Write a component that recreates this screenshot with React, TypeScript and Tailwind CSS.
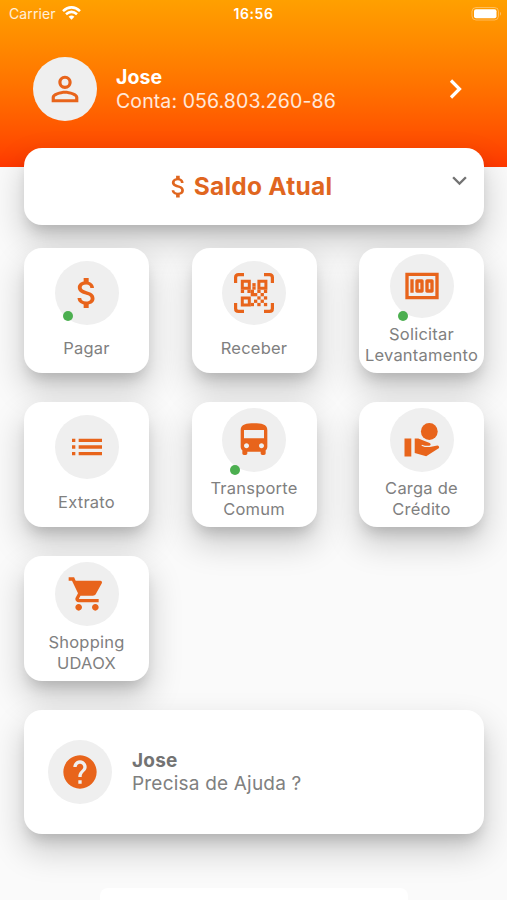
import type { ReactNode } from 'react';
import {
  MdAttachMoney, MdDirectionsBus, MdHelp, MdKeyboardArrowDown,
  MdList, MdMoney, MdPersonOutline, MdShoppingCart,
} from 'react-icons/md';

const card = 'bg-white rounded-[18px] shadow-[0_10px_14px_-5px_rgba(0,0,0,0.16),0_16px_32px_2px_rgba(0,0,0,0.18)]';

function Disc({ children }: { children: ReactNode }) {
  return (
    <div className="flex size-16 shrink-0 items-center justify-center rounded-full bg-[#efefef] text-[#e8641b]">
      {children}
    </div>
  );
}

function HandIcon() {
  return (
    <svg width="36" height="34" viewBox="0 0 36 34" fill="currentColor">
      <circle cx="25.3" cy="8.5" r="8.4" />
      <path d="M.5 15.5h6.8v18H.5zM10.7 15.5h3.6L25.7 20c1.4.6 1.3 2.6-.3 2.8h-4.5l-3-1.1-.4 1.1 3.2 1.3h5.2l7.4-1.7c1-.1 1.8.8 1.8 2v.7L22.2 33.3 10.7 30z" />
    </svg>
  );
}

// Data modules as [column, row] on an 8 x 8 grid.
const modules = [
  [3.5, 1], [3.5, 2], [0, 3], [2, 3], [3, 3], [5, 3], [7, 3],
  [3, 4], [4, 4], [6, 4], [5, 5], [7, 5], [4, 6], [6, 6], [3, 7], [5, 7], [7, 7],
];

function QrIcon() {
  return (
    <svg width="40" height="40" viewBox="0 0 40 40" fill="none" stroke="currentColor">
      <path strokeWidth="3.2" d="M1.6 10V4.6q0-3 3-3H10M30 1.6h5.4q3 0 3 3V10M38.4 30v5.4q0 3-3 3H30M10 38.4H4.6q-3 0-3-3V30" />
      <path strokeWidth="3" d="M8.3 8.3h7v7h-7zM24.9 8.3h7v7h-7zM8.3 24.9h7v7h-7z" />
      <g fill="currentColor" stroke="none">
        {modules.map(([c, r]) => (
          <rect key={`${c}-${r}`} x={6.8 + c * 3.3} y={6.8 + r * 3.3} width="3.3" height="3.3" />
        ))}
      </g>
    </svg>
  );
}

type Tile = { label: string[]; icon: ReactNode; dot?: boolean; spread?: boolean };
const tiles: Tile[] = [
  { label: ['Pagar'], icon: <MdAttachMoney size={40} />, dot: true, spread: true },
  { label: ['Receber'], icon: <QrIcon />, spread: true },
  { label: ['Solicitar', 'Levantamento'], icon: <MdMoney size={40} />, dot: true },
  { label: ['Extrato'], icon: <MdList size={40} />, spread: true },
  { label: ['Transporte', 'Comum'], icon: <MdDirectionsBus size={40} />, dot: true },
  { label: ['Carga de', 'Crédito'], icon: <HandIcon /> },
  { label: ['Shopping', 'UDAOX'], icon: <MdShoppingCart size={40} /> },
];

function TileCard({ label, icon, dot, spread }: Tile) {
  return (
    <div className={`${card} relative flex h-[125px] flex-col items-center ${spread ? 'pt-[13px]' : 'pt-[6px]'}`}>
      <div className="relative">
        <Disc>{icon}</Disc>
        {dot && <span className={`absolute left-2 size-[10px] rounded-full bg-[#4caf50] ${spread ? 'top-[50px]' : 'top-[57px]'}`} />}
      </div>
      <div className={`text-center text-[16.5px] leading-[21px] tracking-[0.22px] whitespace-nowrap text-[#808080] ${spread ? 'mt-[13px]' : 'mt-[6px]'}`}>
        {label.map((l) => <div key={l}>{l}</div>)}
      </div>
    </div>
  );
}

export default function App() {
  return (
    <div className="flex h-[900px] w-[507px] flex-col overflow-hidden bg-[#fafafa] font-['Inter',sans-serif]">
      <header className="h-[167px] shrink-0 bg-linear-to-b from-[#ffa000] to-[#ff3800] text-white">
        <div className="grid h-[27px] grid-cols-3 items-center px-[9px] text-[14px]">
          <div className="flex items-center gap-[6px] tracking-[0.1px] text-white/85">
            <span>Carrier</span>
            <svg width="19" height="14" viewBox="0 0 19 14" className="-mt-[2px]" fill="none" stroke="white" strokeWidth="2.6">
              <path d="M1 5.1Q9.5-2.4 18 5.1M4 8.3q5.5-4.8 11 0" />
              <path d="M6.6 10.7q2.9-2.4 5.8 0L9.5 13.7z" fill="white" stroke="none" />
            </svg>
          </div>
          <div className="text-center font-semibold tracking-[0.6px]">16:56</div>
          <svg className="-mr-1 justify-self-end" width="31" height="14" viewBox="0 0 31 14">
            <rect x="1" y=".5" width="26.5" height="12.5" rx="4" fill="none" stroke="white" strokeOpacity=".35" />
            <rect x="3" y="2.3" width="22.5" height="9" rx="2" fill="white" />
            <path d="M29 4.8q2 2 0 4z" fill="white" fillOpacity=".4" />
          </svg>
        </div>
        <div className="mt-[30px] flex items-center pr-[44px] pl-[33px]">
          <Disc><MdPersonOutline size={40} /></Disc>
          <div className="ml-[19px] flex-1 text-[19.5px] leading-[24px] tracking-[0.1px]">
            <div className="font-bold">Jose</div>
            <div className="text-white/85">Conta: 056.803.260-86</div>
          </div>
          <svg width="14" height="20" viewBox="0 0 14 20" fill="none" stroke="white" strokeWidth="3.2">
            <path d="M2 1.5l8.5 8.5L2 18.5" />
          </svg>
        </div>
      </header>
      <main className="relative -mt-[19px] flex flex-col pr-[23px] pl-6">
        <section className={`${card} relative flex h-[77px] items-center justify-center text-[#e0661f]`}>
          <MdAttachMoney size={29} className="-ml-[12px]" />
          <h1 className="ml-[1px] text-[24.5px] font-bold tracking-[0.25px]">Saldo Atual</h1>
          <MdKeyboardArrowDown size={29} className="absolute top-[18px] right-[10px] text-[#737373]" />
        </section>
        <section className="mt-[23px] grid grid-cols-[125px_125px_125px] justify-between gap-y-[29px]">
          {tiles.map((t) => <TileCard key={t.label[0]} {...t} />)}
        </section>
        <section className={`${card} relative mt-[29px] flex h-[124px] items-center px-6`}>
          <Disc><MdHelp size={40} /></Disc>
          <div className="ml-5 text-[19px] leading-[23px] tracking-[0.2px] text-[#808080]">
            <div className="font-bold text-[#737373]">Jose</div>
            <div>Precisa de Ajuda ?</div>
          </div>
        </section>
        <div className="relative mx-auto mt-[54px] h-10 w-[308px] rounded-t-lg bg-white" />
      </main>
    </div>
  );
}
